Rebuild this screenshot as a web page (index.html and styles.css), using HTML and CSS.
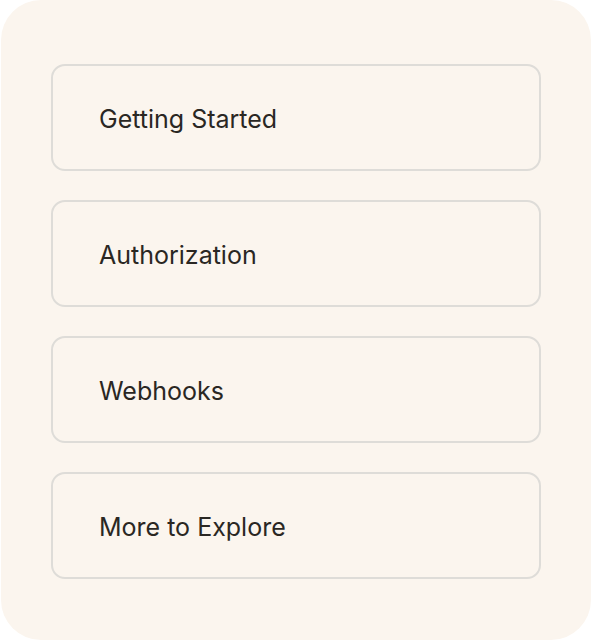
FILE: index.html
```html
<!DOCTYPE html>
<html>
<head>
<meta charset="utf-8">
<link rel="stylesheet" href="styles.css">
</head>
<body>
<div class="card">
  <a class="item">Getting Started</a>
  <a class="item">Authorization</a>
  <a class="item">Webhooks</a>
  <a class="item">More to Explore</a>
</div>
</body>
</html>
```
FILE: styles.css
```css
html, body {
  margin: 0;
  padding: 0;
  background: #ffffff;
}
.card {
  box-sizing: border-box;
  width: 590px;
  height: 640px;
  margin-left: 1px;
  background: #fbf5ee;
  border-radius: 40px;
  padding: 64px 50px 0 50px;
  display: flex;
  flex-direction: column;
  gap: 29px;
}
.item {
  box-sizing: border-box;
  height: 107px;
  flex: none;
  border: 2px solid #dedcd8;
  border-radius: 14px;
  display: flex;
  align-items: center;
  padding-left: 46px;
  padding-top: 2px;
  font-family: Inter, "Noto Sans", sans-serif;
  font-size: 25px;
  font-weight: 400;
  color: #2a2723;
  letter-spacing: 0;
}
```
